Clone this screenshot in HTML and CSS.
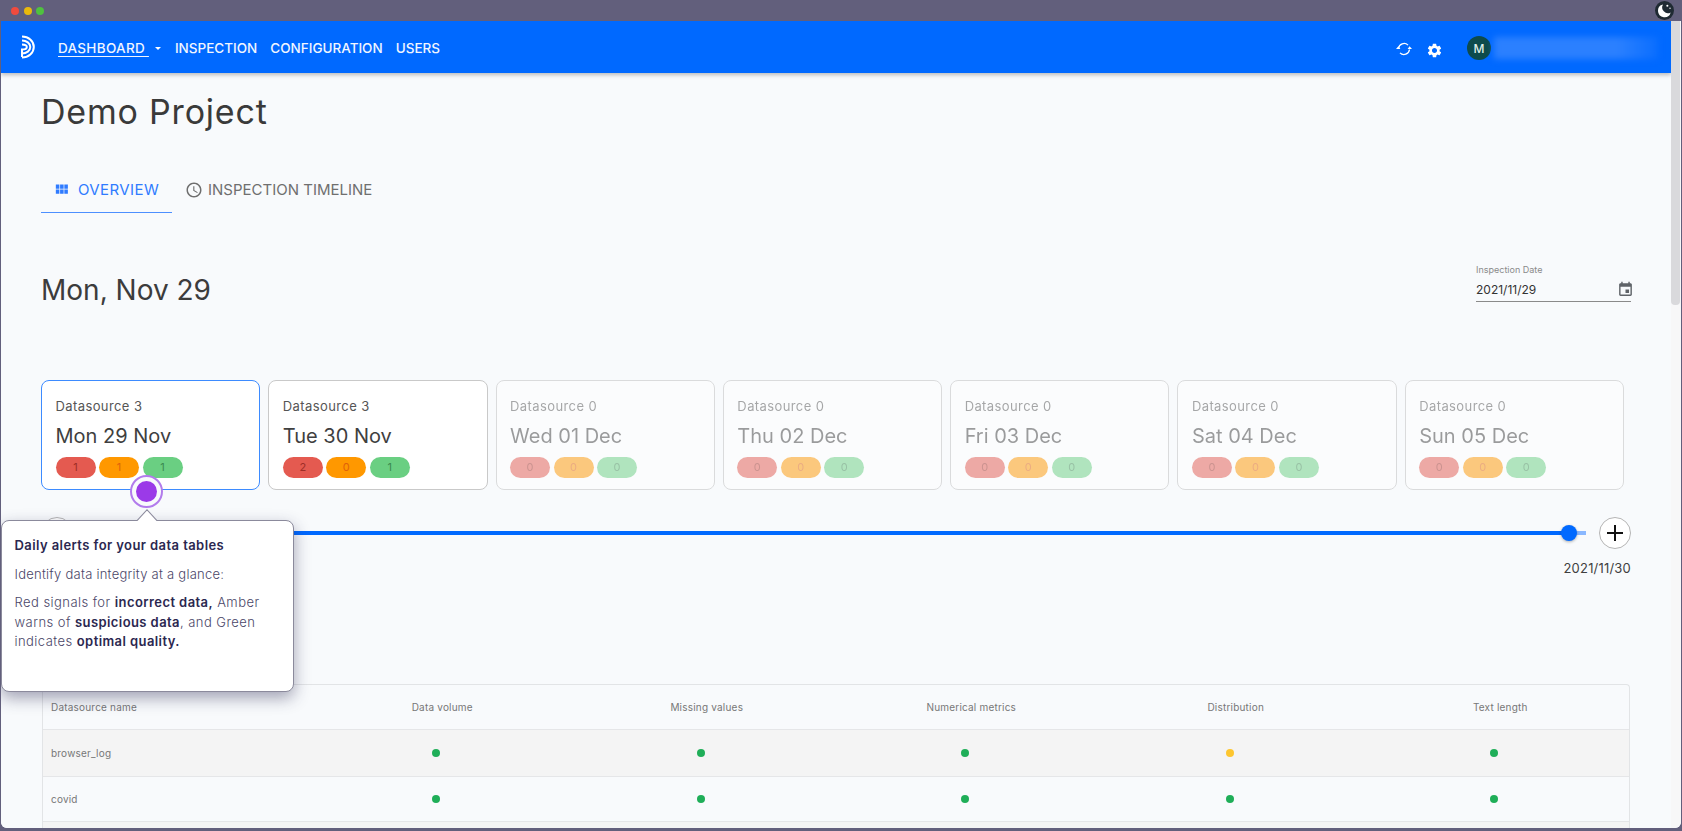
FILE: index.html
```html
<!DOCTYPE html>
<html lang="en">
<head>
<meta charset="utf-8">
<title>Demo Project</title>
<link rel="stylesheet" href="styles.css">
</head>
<body>
<div class="window">
  <header class="titlebar">
    <span class="light light-red"></span>
    <span class="light light-yellow"></span>
    <span class="light light-green"></span>
    <span class="moon">
      <svg viewBox="0 0 20 20" width="19" height="19"><path fill="#fff" d="M8.500 3.600a6.800 6.800 0 1 0 8 8.400A6 6 0 0 1 8.500 3.600z"/><circle cx="13" cy="5" r="1.100" fill="#fff"/><circle cx="15.800" cy="7.600" r=".7" fill="#fff"/></svg>
    </span>
  </header>
  <div class="app">
    <div class="viewport">
      <nav class="nav">
        <svg class="logo" viewBox="0 0 14 24" width="14" height="24" fill="none" stroke="#fff" stroke-width="2">
          <path d="M1 1.500c6.500 0 11.800 4.600 11.800 10.500S7.500 22.500 1 22.500"/>
          <path d="M1 5.500c4.500 0 8.300 2.900 8.300 6.500S5.500 18.500 1 18.500"/>
          <path d="M1 9.500c2.500 0 4.800 1 4.800 2.500S3.500 14.500 1 14.500V22"/>
        </svg>
        <a class="nav-link nav-link-active">DASHBOARD&nbsp;</a>
        <span class="caret"></span>
        <a class="nav-link">INSPECTION</a>
        <a class="nav-link">CONFIGURATION</a>
        <a class="nav-link">USERS</a>
        <span class="nav-spacer"></span>
        <svg class="nav-icon nav-sync" viewBox="0 0 16 16" width="16" height="16" fill="none" stroke="#fff" stroke-width="1.300">
          <path d="M2.500 7.500a5.600 5.600 0 0 1 9.500-3.400"/>
          <path d="M13.500 8.500a5.600 5.600 0 0 1-9.500 3.400"/>
          <path fill="#fff" stroke="none" d="M0 8h4.400L2.400 5.200zM16 8h-4.400l2-2.800z"/>
        </svg>
        <svg class="nav-icon nav-gear" viewBox="0 0 24 24" width="17" height="17"><path fill="#fff" d="M19.140 12.940c.04-.3.060-.61.060-.94 0-.32-.02-.64-.07-.94l2.030-1.580c.18-.14.230-.41.120-.61l-1.920-3.320c-.12-.22-.37-.29-.59-.22l-2.390.96c-.5-.38-1.030-.7-1.620-.94l-.36-2.540c-.04-.24-.24-.41-.48-.41h-3.840c-.24 0-.43.17-.47.41l-.36 2.540c-.59.24-1.130.57-1.620.94l-2.390-.96c-.22-.08-.47 0-.59.22L2.740 8.870c-.12.21-.08.47.12.61l2.030 1.580c-.05.3-.09.63-.09.94s.02.64.07.94l-2.030 1.580c-.18.14-.23.41-.12.61l1.920 3.320c.12.22.37.29.59.22l2.390-.96c.5.38 1.030.7 1.620.94l.36 2.540c.05.24.24.41.48.41h3.840c.24 0 .44-.17.47-.41l.36-2.540c.59-.24 1.130-.56 1.620-.94l2.390.96c.22.08.47 0 .59-.22l1.920-3.320c.12-.22.070-.47-.12-.61l-2.010-1.580zM12 15.600c-1.980 0-3.600-1.620-3.600-3.600s1.620-3.600 3.600-3.600 3.600 1.620 3.600 3.600-1.620 3.600-3.600 3.600z"/></svg>
        <span class="avatar">M</span>
        <span class="user-blur"></span>
      </nav>
      <main class="content">
        <h1 class="title">Demo Project</h1>
        <div class="tabs">
          <a class="tab tab-active">
            <svg viewBox="0 0 24 24" width="17" height="17"><path fill="currentColor" d="M4 11h5V5H4v6zm0 7h5v-6H4v6zm6 0h5v-6h-5v6zm6 0h5v-6h-5v6zm-6-7h5V5h-5v6zm6-6v6h5V5h-5z"/></svg>
            OVERVIEW
          </a>
          <a class="tab tab-timeline">
            <svg viewBox="0 0 24 24" width="18" height="18"><path fill="currentColor" d="M11.990 2C6.470 2 2 6.480 2 12s4.470 10 9.990 10C17.520 22 22 17.520 22 12S17.520 2 11.990 2zM12 20c-4.420 0-8-3.580-8-8s3.580-8 8-8 8 3.580 8 8-3.580 8-8 8zm.5-13H11v6l5.250 3.150.75-1.230-4.500-2.670z"/></svg>
            INSPECTION TIMELINE
          </a>
        </div>
        <div class="date-row">
          <h2 class="date-title">Mon, Nov 29</h2>
          <div class="date-field">
            <span class="date-label">Inspection Date</span>
            <div class="date-input">
              <span>2021/11/29</span>
              <svg class="date-icon" viewBox="0 0 24 24" width="17" height="17"><path fill="#5f6368" d="M17 12h-5v5h5v-5zM16 1v2H8V1H6v2H5c-1.110 0-1.990.9-1.990 2L3 19c0 1.100.89 2 2 2h14c1.100 0 2-.9 2-2V5c0-1.100-.9-2-2-2h-1V1h-2zm3 18H5V8h14v11z"/></svg>
            </div>
          </div>
        </div>
        <section class="cards">
          <article class="card card-selected">
            <div class="card-source">Datasource 3</div>
            <div class="card-date">Mon 29 Nov</div>
            <div class="pills"><span class="pill pill-red">1</span><span class="pill pill-amber">1</span><span class="pill pill-green">1</span></div>
          </article>
          <article class="card card-data">
            <div class="card-source">Datasource 3</div>
            <div class="card-date">Tue 30 Nov</div>
            <div class="pills"><span class="pill pill-red">2</span><span class="pill pill-amber">0</span><span class="pill pill-green">1</span></div>
          </article>
          <article class="card card-empty">
            <div class="card-source">Datasource 0</div>
            <div class="card-date">Wed 01 Dec</div>
            <div class="pills"><span class="pill pill-red">0</span><span class="pill pill-amber">0</span><span class="pill pill-green">0</span></div>
          </article>
          <article class="card card-empty">
            <div class="card-source">Datasource 0</div>
            <div class="card-date">Thu 02 Dec</div>
            <div class="pills"><span class="pill pill-red">0</span><span class="pill pill-amber">0</span><span class="pill pill-green">0</span></div>
          </article>
          <article class="card card-empty">
            <div class="card-source">Datasource 0</div>
            <div class="card-date">Fri 03 Dec</div>
            <div class="pills"><span class="pill pill-red">0</span><span class="pill pill-amber">0</span><span class="pill pill-green">0</span></div>
          </article>
          <article class="card card-empty">
            <div class="card-source">Datasource 0</div>
            <div class="card-date">Sat 04 Dec</div>
            <div class="pills"><span class="pill pill-red">0</span><span class="pill pill-amber">0</span><span class="pill pill-green">0</span></div>
          </article>
          <article class="card card-empty">
            <div class="card-source">Datasource 0</div>
            <div class="card-date">Sun 05 Dec</div>
            <div class="pills"><span class="pill pill-red">0</span><span class="pill pill-amber">0</span><span class="pill pill-green">0</span></div>
          </article>
        </section>
        <div class="slider">
          <span class="round-btn"></span>
          <div class="track"><span class="track-fill"></span><span class="thumb"></span></div>
          <span class="round-btn">
            <svg viewBox="0 0 18 18" width="18" height="18"><path d="M9 1v16M1 9h16" stroke="#111" stroke-width="2" fill="none"/></svg>
          </span>
        </div>
        <div class="slider-end">2021/11/30</div>
        <section class="table">
          <div class="row row-head">
            <span class="cell-name">Datasource name</span>
            <span class="cell">Data volume</span><span class="cell">Missing values</span><span class="cell">Numerical metrics</span><span class="cell">Distribution</span><span class="cell">Text length</span>
          </div>
          <div class="row row-shade">
            <span class="cell-name">browser_log</span>
            <span class="cell"><i class="dot"></i></span><span class="cell"><i class="dot"></i></span><span class="cell"><i class="dot"></i></span><span class="cell"><i class="dot dot-amber"></i></span><span class="cell"><i class="dot"></i></span>
          </div>
          <div class="row">
            <span class="cell-name">covid</span>
            <span class="cell"><i class="dot"></i></span><span class="cell"><i class="dot"></i></span><span class="cell"><i class="dot"></i></span><span class="cell"><i class="dot"></i></span><span class="cell"><i class="dot"></i></span>
          </div>
          <div class="row row-shade"></div>
        </section>
      </main>
      <span class="beacon"><span class="beacon-core"></span></span>
      <aside class="tooltip">
        <span class="tooltip-arrow"></span>
        <p class="tooltip-title">Daily alerts for your data tables</p>
        <p>Identify data integrity at a glance:</p>
        <p class="tooltip-body">Red signals for <b>incorrect data,</b> Amber warns of <b>suspicious data</b>, and Green indicates <b>optimal quality.</b></p>
      </aside>
    </div>
    <div class="scrollbar"><span class="scroll-thumb"></span></div>
  </div>
</div>
</body>
</html>
```

FILE: styles.css
```css
* { box-sizing: border-box; }
html, body { margin: 0; height: 100%; overflow: hidden; }
body { font-family: "Inter", "Liberation Sans", sans-serif; color: #3a3a3a; }

.window { width: 1682px; height: 831px; background: #625f7c; display: flex; flex-direction: column; }

.titlebar { height: 21px; flex: none; display: flex; align-items: center; gap: 4.500px; padding-left: 11px; position: relative; }
.light { width: 8px; height: 8px; border-radius: 50%; }
.light-red { background: #f04b3e; }
.light-yellow { background: #eab90c; }
.light-green { background: #4fc13f; }
.moon { margin-left: auto; margin-right: 8px; width: 19px; height: 19px; border-radius: 50%; background: #1f2a33; display: block; }
.moon svg { display: block; }

.app { flex: 1; min-height: 0; display: flex; margin: 0 1px 3px; border-radius: 0 0 6px 6px; overflow: hidden; background: #f8fafc; }
.viewport { flex: 1; min-width: 0; position: relative; overflow: hidden; background: #f8fafc; }
.scrollbar { width: 10px; flex: none; background: #f7f7f8; }
.scroll-thumb { display: block; width: 9px; height: 284px; background: #d9d9dc; border-radius: 0 0 4px 4px; }

.nav { height: 52px; background: #0069ff; display: flex; align-items: center; padding: 2px 0 0 20px; color: #fff; box-shadow: 0 2px 4px rgba(0,0,0,.25); position: relative; }
.logo { margin: -3px 23px 0 0; flex: none; }
.nav-link { font-size: 13.500px; font-weight: 500; margin-right: 13px; color: #f1f6ff; }
.nav-link-active { margin-right: 6px; text-decoration: underline; text-underline-offset: 3px; letter-spacing: .3px; }
.caret { width: 0; height: 0; border: 3px solid transparent; border-top: 3.500px solid #fff; border-bottom: 0; margin-right: 14px; }
.nav-spacer { flex: 1; }
.nav-icon { flex: none; display: block; }
.nav-sync { margin-top: 2px; }
.nav-gear { margin: 4px 24px 0 14px; }
.avatar { width: 24px; height: 24px; border-radius: 50%; background: #0d4b4c; color: #dfeee8; font-size: 12px; font-weight: 500; display: flex; align-items: center; justify-content: center; flex: none; }
.user-blur { width: 164px; height: 22px; margin-left: 3px; margin-right: 13px; background: linear-gradient(90deg, #2b80ff 0%, #2b80ff 75%, #0a6eff 100%); filter: blur(3px); }

.content { padding: 19px 40px 0 40px; }
.title { margin: 0; font-size: 34px; font-weight: 400; line-height: 40px; color: #3a3a3a; letter-spacing: .8px; }
.tabs { display: flex; margin-top: 35px; height: 46px; }
.tab { display: flex; align-items: center; gap: 8px; font-size: 15px; color: #6f6f6f; border-bottom: 1px solid transparent; }
.tab-active { width: 131px; padding-left: 12px; letter-spacing: .4px; color: #2f7bff; border-bottom-color: #4d8fff; }
.tab-timeline { gap: 5px; padding-left: 13px; }

.date-row { display: flex; justify-content: space-between; margin-top: 51px; height: 116px; }
.date-title { margin: 6px 0 0; font-size: 28px; font-weight: 400; line-height: 40px; color: #3c3c3c; }
.date-field { width: 155px; height: 38px; display: flex; flex-direction: column; }
.date-label { font-size: 9px; line-height: 12px; color: #8a8a8a; }
.date-input { display: flex; justify-content: space-between; align-items: center; font-size: 12px; height: 26px; padding-top: 1px; border-bottom: 1px solid #8a8a8a; color: #333; }
.date-icon { margin-right: -3px; }

.cards { display: grid; grid-template-columns: repeat(7, 1fr); gap: 8px; margin-right: 7px; }
.card { height: 110px; border-radius: 8px; background: #fff; border: 1px solid #c9c9c9; padding: 16px 13.500px 0; }
.card-selected { border-color: #3d8bff; }
.card-empty { opacity: .5; border-color: #bdbdbd; }
.card-source { font-size: 13px; line-height: 18px; color: #555; letter-spacing: .4px; }
.card-date { font-size: 20px; line-height: 24px; margin-top: 9px; color: #3f3f3f; }
.pills { display: flex; gap: 3.500px; margin-top: 9px; }
.pill { width: 40px; height: 21px; border-radius: 11px; font-size: 11px; line-height: 21px; text-align: center; }
.pill-red { background: #e45a50; color: #9e2e26; }
.pill-amber { background: #ff9800; color: #e0620a; }
.pill-green { background: #6acf82; color: #3b8a50; }

.slider { display: flex; align-items: center; margin-top: 27px; height: 32px; }
.round-btn { width: 32px; height: 32px; border-radius: 50%; border: 1px solid #b5b5b5; background: #fff; display: flex; align-items: center; justify-content: center; flex: none; }
.track { flex: 1; height: 3.500px; margin: 0 13px 0 8px; background: #8ab8ff; position: relative; }
.track-fill { position: absolute; left: 0; top: 0; bottom: 0; right: 16px; background: #0069ff; }
.thumb { position: absolute; right: 9px; top: -6.500px; width: 16px; height: 16px; border-radius: 50%; background: #0069ff; box-shadow: 0 1px 3px rgba(0,0,0,.3); }
.slider-end { text-align: right; font-size: 13px; line-height: 18px; margin-top: 10px; color: #3f3f3f; letter-spacing: .2px; }

.table { margin: 107px 1px 0 1px; border: 1px solid #e2e4e6; border-radius: 4px 4px 0 0; border-bottom: 0; }
.row { display: grid; grid-template-columns: 267px repeat(5, 264.500px); align-items: center; height: 45px; border-top: 1px solid #e5e6e8; font-size: 10px; color: #777; letter-spacing: .2px; }
.row-head { border-top: 0; height: 44px; }
.row-shade { background: #f4f4f4; height: 47px; }
.cell-name { padding-left: 8px; }
.cell { text-align: center; }
.dot { display: block; width: 8px; height: 8px; border-radius: 50%; background: #1fae58; margin: 0 auto; position: relative; left: -6px; }
.dot-amber { background: #fdc62f; }

.beacon { position: absolute; left: 129px; top: 454px; width: 33px; height: 33px; border-radius: 50%; border: 2.500px solid #b27cec; background: #f8fafc; display: flex; align-items: center; justify-content: center; }
.beacon-core { width: 21px; height: 21px; border-radius: 50%; background: #9b3ae8; }

.tooltip { position: absolute; left: 0; top: 499px; width: 293px; height: 172px; background: #fff; border: 1px solid #8b8a9c; border-radius: 8px; padding: 15px 12.500px; box-shadow: 0 6px 16px rgba(40,40,80,.42); font-size: 13px; font-weight: 300; line-height: 19.500px; color: #4a4668; letter-spacing: .25px; }
.tooltip p { margin: 0 0 9px; }
.tooltip .tooltip-body { letter-spacing: .45px; }
.tooltip b, .tooltip-title { font-weight: 600; color: #2b2750; letter-spacing: .42px; }
.tooltip-arrow { position: absolute; left: 134px; top: -12px; width: 22px; height: 12px; background: #8b8a9c; clip-path: polygon(50% 0, 100% 100%, 0 100%); }
.tooltip-arrow::after { content: ""; position: absolute; left: 1px; top: 1.500px; width: 20px; height: 11px; background: #fff; clip-path: polygon(50% 0, 100% 100%, 0 100%); }
```
